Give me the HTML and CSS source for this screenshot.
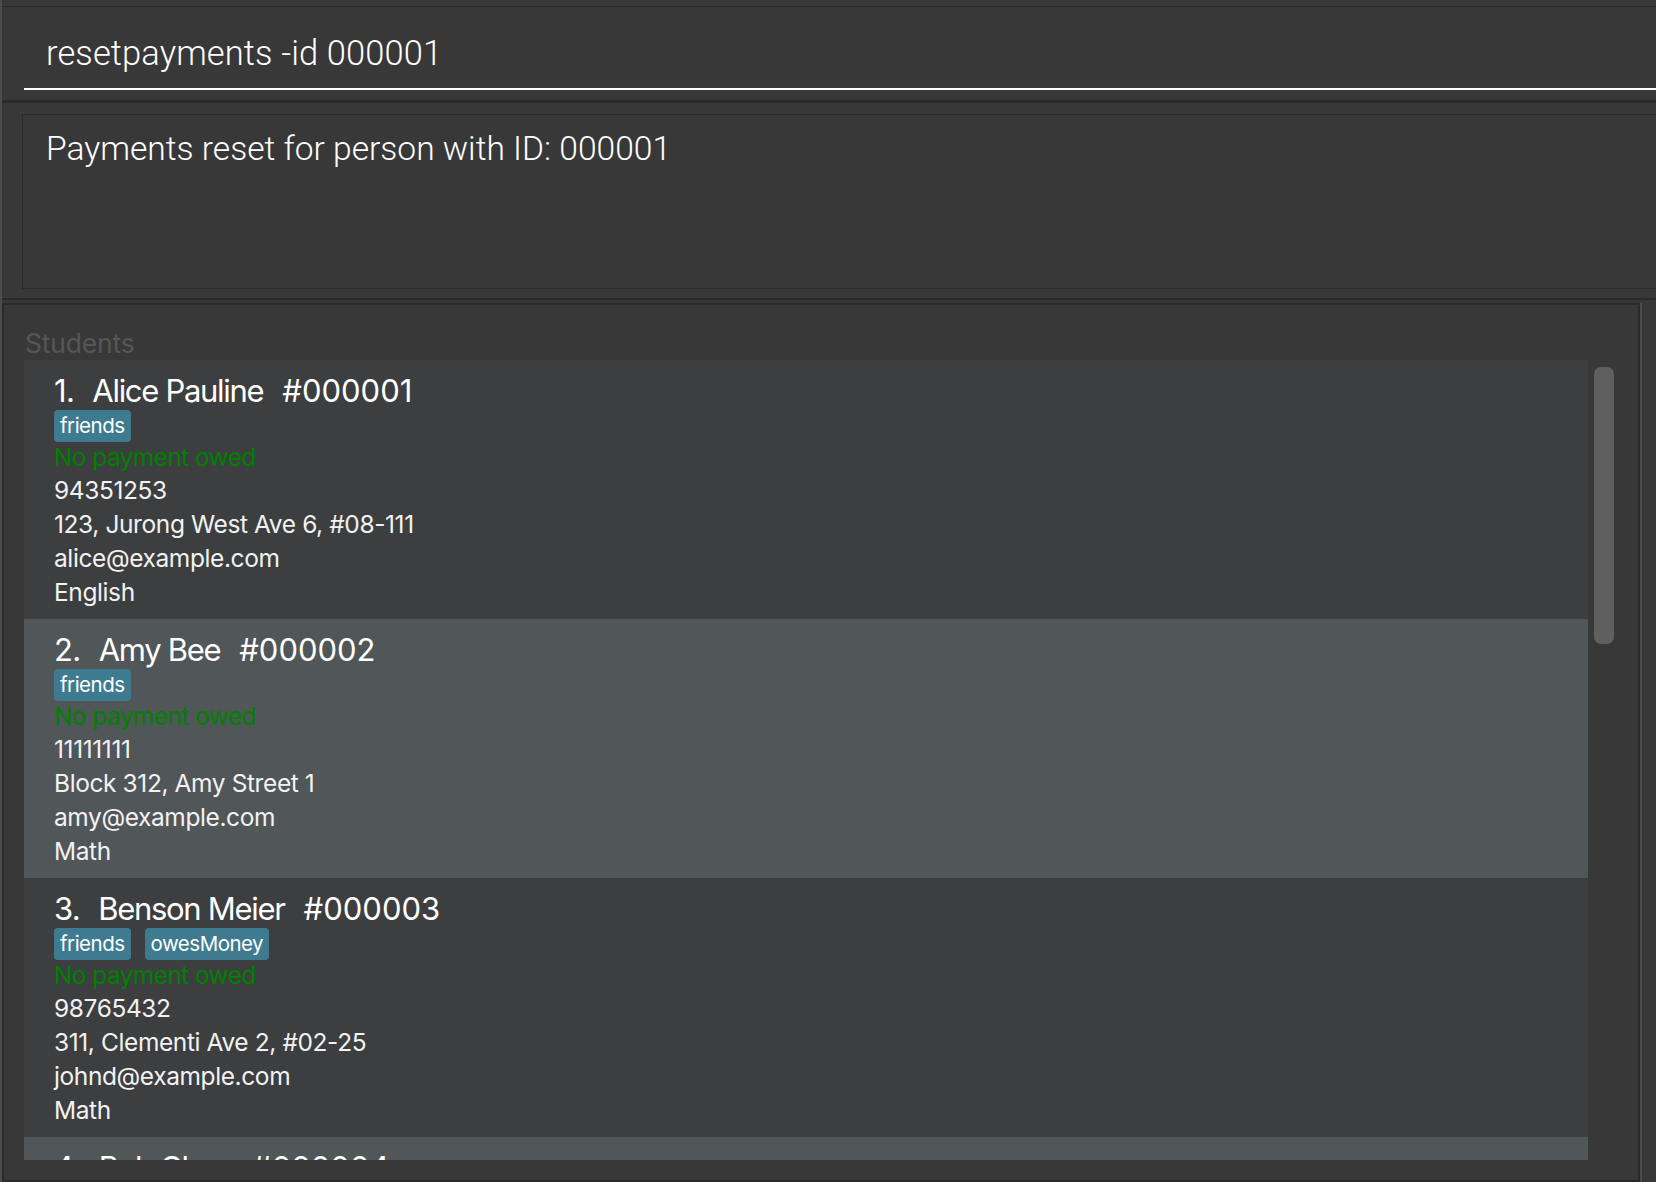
FILE: index.html
```html
<!DOCTYPE html>
<html lang="en">
<head>
<meta charset="utf-8">
<title>Students</title>
<link rel="stylesheet" href="styles.css">
</head>
<body>
<div class="app">
  <div class="top-gap"></div>
  <div class="cmd-pane">
    <div class="cmd-field">resetpayments -id 000001</div>
  </div>
  <div class="result-pane">
    <div class="result-box">Payments reset for person with ID: 000001</div>
  </div>
  <div class="main-row">
    <div class="panel">
      <div class="panel-title">Students</div>
      <div class="list-row">
        <div class="list">
          <div class="card even">
            <div class="name-row"><span class="idx">1.</span><span class="nm">Alice Pauline</span><span class="pid">#000001</span></div>
            <div class="tags"><span class="tag">friends</span></div>
            <div class="owed">No payment owed</div>
            <div class="line">94351253</div>
            <div class="line">123, Jurong West Ave 6, #08-111</div>
            <div class="line">alice@example.com</div>
            <div class="line">English</div>
          </div>
          <div class="card odd">
            <div class="name-row"><span class="idx">2.</span><span class="nm">Amy Bee</span><span class="pid">#000002</span></div>
            <div class="tags"><span class="tag">friends</span></div>
            <div class="owed">No payment owed</div>
            <div class="line">11111111</div>
            <div class="line">Block 312, Amy Street 1</div>
            <div class="line">amy@example.com</div>
            <div class="line">Math</div>
          </div>
          <div class="card even">
            <div class="name-row"><span class="idx">3.</span><span class="nm">Benson Meier</span><span class="pid">#000003</span></div>
            <div class="tags"><span class="tag">friends</span><span class="tag">owesMoney</span></div>
            <div class="owed">No payment owed</div>
            <div class="line">98765432</div>
            <div class="line">311, Clementi Ave 2, #02-25</div>
            <div class="line">johnd@example.com</div>
            <div class="line">Math</div>
          </div>
          <div class="card odd">
            <div class="name-row"><span class="idx">4.</span><span class="nm">Bob Choo</span><span class="pid">#000004</span></div>
            <div class="tags"><span class="tag">husband</span><span class="tag">friends</span></div>
            <div class="owed">No payment owed</div>
            <div class="line">22222222</div>
            <div class="line">Block 123, Bobby Street 3</div>
            <div class="line">bob@example.com</div>
            <div class="line">Math</div>
          </div>
        </div>
        <div class="scrollbar"><div class="thumb"></div></div>
      </div>
    </div>
    <div class="divider"></div>
  </div>
</div>
</body>
</html>
```

FILE: styles.css
```css
html, body {
  margin: 0;
  padding: 0;
}

body {
  width: 1656px;
  height: 1182px;
  overflow: hidden;
  background: #383838;
  color: #ffffff;
}

.app {
  height: 1182px;
  border-left: 2px solid #4b4b4b;
  display: flex;
  flex-direction: column;
}

.top-gap {
  height: 6px;
  flex: none;
}

.cmd-pane {
  flex: none;
  height: 93px;
  border-top: 1px solid #2a2a2a;
  border-bottom: 3px solid #2a2a2a;
  padding-left: 22px;
  box-sizing: content-box;
}

.cmd-field {
  height: 83px;
  box-sizing: border-box;
  border-bottom: 2px solid #ffffff;
  margin-right: -20px;
  padding: 26px 0 0 22px;
  font-family: Roboto, "Liberation Sans", sans-serif;
  font-weight: 300;
  font-size: 34.5px;
  line-height: 40px;
  letter-spacing: 0.1px;
  white-space: nowrap;
}

.result-pane {
  flex: none;
  height: 197px;
  padding: 11px 0 0 20px;
  box-sizing: border-box;
  border-bottom: 2px solid #2a2a2a;
}

.result-box {
  height: 175px;
  box-sizing: border-box;
  border: 1px solid #2a2a2a;
  margin-right: -20px;
  padding: 14px 0 0 23px;
  font-family: Roboto, "Liberation Sans", sans-serif;
  font-weight: 300;
  font-size: 33.6px;
  line-height: 40px;
  white-space: nowrap;
}

.main-row {
  flex: 1;
  display: flex;
  margin-top: 3px;
  min-height: 0;
}

.panel {
  width: 1638px;
  box-sizing: border-box;
  border: 2px solid #2a2a2a;
  display: flex;
  flex-direction: column;
  padding-top: 22px;
}

.divider {
  width: 2px;
  background: #4b4b4b;
}

.panel-title {
  padding-left: 21px;
  font-family: Inter, "Noto Sans", sans-serif;
  font-size: 26.5px;
  line-height: 33px;
  color: #565656;
  letter-spacing: -0.2px;
}

.list-row {
  display: flex;
  padding-left: 20px;
}

.list {
  width: 1564px;
  height: 800px;
  overflow: hidden;
  flex: none;
}

.scrollbar {
  width: 20px;
  margin-left: 6px;
  padding-top: 7px;
}

.thumb {
  height: 277px;
  background: #5f5f5f;
  border-radius: 7px;
}

.card {
  height: 259px;
  box-sizing: border-box;
  padding: 11px 0 0 30px;
  font-family: Inter, "Noto Sans", sans-serif;
  color: #ffffff;
}

.card.even {
  background: #3c3e3f;
}

.card.odd {
  background: #515658;
}

.name-row {
  display: flex;
  gap: 18px;
  font-size: 31px;
  line-height: 39px;
  white-space: nowrap;
}

.name-row .idx {
  letter-spacing: -0.6px;
}

.name-row .nm {
  letter-spacing: -1.3px;
}

.name-row .pid {
  letter-spacing: 0;
  margin-left: 1px;
}

.tags {
  display: flex;
  gap: 14px;
  height: 31px;
}

.tag {
  background: #3e7b91;
  color: #ffffff;
  border-radius: 4px;
  padding: 0 6px;
  font-size: 20.5px;
  line-height: 32px;
  height: 32px;
  letter-spacing: -0.5px;
}

.owed {
  color: #008000;
  font-size: 24.5px;
  line-height: 32px;
  letter-spacing: -0.6px;
}

.line {
  font-size: 24.5px;
  line-height: 34px;
  letter-spacing: -0.4px;
  color: #f2f2f2;
  white-space: nowrap;
}
```
